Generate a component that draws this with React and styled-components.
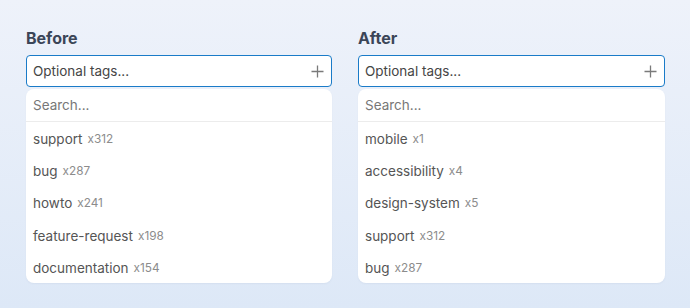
import styled, { createGlobalStyle } from "styled-components"

const GlobalStyle = createGlobalStyle`
    html, body {
        margin: 0;
        padding: 0;
    }
    body {
        width: 690px;
        height: 308px;
        overflow: hidden;
        background: linear-gradient(180deg, #eef2fa 0%, #dde8f7 100%);
        font-family: Inter, "Noto Sans", sans-serif;
    }
`;

const columns = [
    {
        title: "Before",
        tags: [
            ["support", 312],
            ["bug", 287],
            ["howto", 241],
            ["feature-request", 198],
            ["documentation", 154],
        ],
    },
    {
        title: "After",
        tags: [
            ["mobile", 1],
            ["accessibility", 4],
            ["design-system", 5],
            ["support", 312],
            ["bug", 287],
        ],
    },
];

const PlusIcon = () => (
    <svg width="13" height="13" viewBox="0 0 13 13" fill="none">
        <path d="M6.5 0.5v12M0.5 6.5h12" stroke="#7a7a7a" strokeWidth="1.3" />
    </svg>
);

const App = () => {
    return (
        <>
            <GlobalStyle />
            <Page>
                {columns.map((col) => (
                    <Column key={col.title}>
                        <Heading>{col.title}</Heading>
                        <Picker>
                            <Placeholder>Optional tags...</Placeholder>
                            <PlusIcon />
                        </Picker>
                        <Dropdown>
                            <Search>Search...</Search>
                            {col.tags.map(([name, count]) => (
                                <Item key={name}>
                                    {name}
                                    <Count>x{count}</Count>
                                </Item>
                            ))}
                        </Dropdown>
                    </Column>
                ))}
            </Page>
        </>
    )
};

const Page = styled.div`
    display: grid;
    grid-template-columns: 306px 307px;
    column-gap: 26px;
    padding: 28px 0 0 26px;
`;

const Column = styled.div`
    display: flex;
    flex-direction: column;
`;

const Heading = styled.h2`
    margin: 0 0 7px;
    font-size: 16px;
    font-weight: 700;
    line-height: 20px;
    color: #3b4557;
`;

const Picker = styled.div`
    box-sizing: border-box;
    height: 32px;
    display: flex;
    align-items: center;
    justify-content: space-between;
    padding: 0 7px 0 6px;
    background: #fff;
    border: 1.5px solid #1a7bc8;
    border-radius: 4px;
`;

const Placeholder = styled.span`
    font-size: 13.5px;
    color: #454545;
`;

const Dropdown = styled.div`
    margin-top: 2px;
    background: #fff;
    border-radius: 8px;
    overflow: hidden;
    box-shadow: 0 1px 2px rgba(60, 80, 120, 0.06);
`;

const Search = styled.div`
    height: 32px;
    display: flex;
    align-items: center;
    padding: 0 7px;
    border-bottom: 1px solid #ececec;
    font-size: 13.5px;
    color: #777;
`;

const Item = styled.div`
    box-sizing: border-box;
    height: 32.2px;
    display: flex;
    align-items: center;
    gap: 5px;
    padding: 2px 7px 0;
    font-size: 13.5px;
    color: #555;
`;

const Count = styled.span`
    font-size: 11.8px;
    color: #8c8c8c;
`;

export default App;
